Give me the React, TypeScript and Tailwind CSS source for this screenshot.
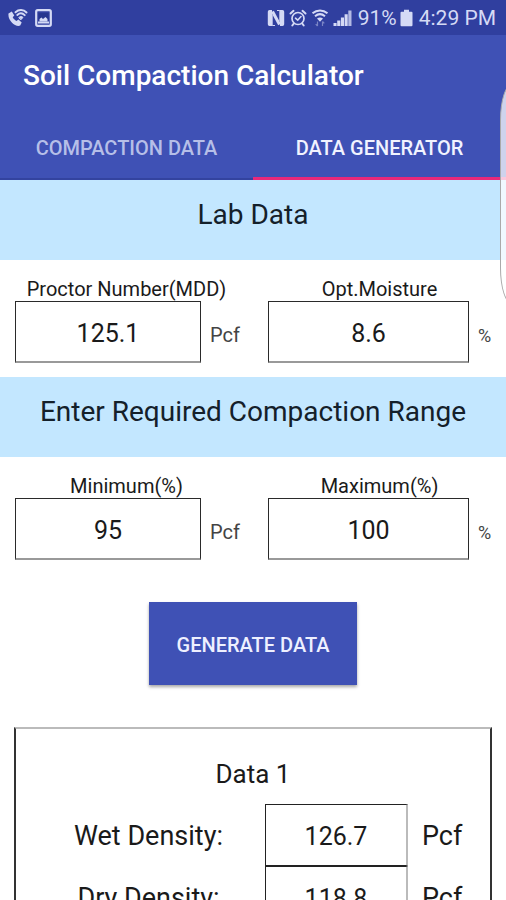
const labFields = [
  { id: "mdd", label: "Proctor Number(MDD)", value: "125.1", unit: "Pcf" },
  { id: "moisture", label: "Opt.Moisture", value: "8.6", unit: "%" }
];

const rangeFields = [
  { id: "min", label: "Minimum(%)", value: "95", unit: "Pcf" },
  { id: "max", label: "Maximum(%)", value: "100", unit: "%" }
];

const results = [
  { id: "wet", label: "Wet Density:", value: "126.7", unit: "Pcf" },
  { id: "dry", label: "Dry Density:", value: "118.8", unit: "Pcf" }
];

type Field = { id: string; label: string; value: string; unit: string };

function StatusBar() {
  return (
    <div className="h-[35px] shrink-0 bg-[#303f9f] flex items-center justify-between pl-2 pr-[10px] text-[#d5daf5]">
      <div className="flex items-center gap-[7px]">
        {/* Wi-Fi calling */}
        <svg width="20" height="20" viewBox="0 0 20 20" fill="none" stroke="currentColor" strokeLinecap="round">
          <path d="M.5 5.5 3.8 3.5l2.5 4-1.6 1.8c.8 1.6 2.1 2.8 3.8 3.7l1.9-1.4 3.3 3-1.5 3C7.5 19.5-.5 12.5.5 5.500Z" fill="currentColor" stroke="none" />
          <path d="M7.5 4.2c3.2-3 8-3 11 .3M9.3 6.9c2.2-2 5.2-2 7.4.2" strokeWidth="2" />
          <path d="M11 9.300c1.2-1 2.8-1 4 .1l-2 2.200Z" fill="currentColor" strokeWidth="1" />
        </svg>
        {/* Screenshot saved */}
        <svg width="17" height="18" viewBox="0 0 17 18" fill="none" stroke="currentColor">
          <rect x="1.2" y="1.2" width="14.6" height="15.6" rx="1.5" strokeWidth="2.2" />
          <rect x="3.5" y="4" width="10" height="8.5" fill="#26358f" stroke="none" />
          <path d="M4.5 12.5V10l2-1.5 1.5 1.5 2.5-2 2 2v2.500Z" fill="currentColor" stroke="none" />
          <path d="M3 13.5h11" strokeWidth="2" />
        </svg>
      </div>

      <div className="flex items-center">
        {/* NFC */}
        <svg width="18" height="18" viewBox="0 0 18 18" fill="none" stroke="currentColor">
          <path d="M5 1H2.5Q.8 1 .8 2.8v12.4Q.8 17 2.5 17H5ZM13 1h2.5q1.7 0 1.7 1.8v12.4q0 1.8-1.7 1.800H13Z" fill="currentColor" stroke="none" />
          <path d="m5.5 2.5 7 13" strokeWidth="3" />
          <path d="M5.2 5.5V16.5H8M12.8 12.5v-11H10" strokeWidth="1" />
        </svg>
        {/* Alarm */}
        <svg className="ml-1" width="18" height="18" viewBox="0 0 18 18" fill="none" stroke="currentColor" strokeLinecap="round">
          <circle cx="9" cy="9.5" r="6" strokeWidth="1.7" />
          <path d="M1.5 4.5 4.5 1.800M16.500 4.500l-3-2.700M4.800 14.500l-1.500 2M13.200 14.500l1.500 2" strokeWidth="2" />
          <path d="m6.5 9.2 2.2 2 3.3-3.7" strokeWidth="1.6" />
        </svg>
        {/* Wi-Fi */}
        <svg className="ml-1" width="18" height="18" viewBox="0 0 18 18" fill="none" stroke="currentColor">
          <path d="M1.5 4.3c4.5-3.7 10.5-3.7 15 0M4 7.2c3-2.5 7-2.5 10 0" strokeWidth="2" />
          <path d="M6 9.6c1.9-1.5 4.1-1.5 6 0l-3 3.200Z" fill="currentColor" stroke="none" />
          <path d="M6.5 12.5V17m-1.8-1.8L6.5 17M11.5 17v-4.5m1.8 1.900-1.8-1.900" strokeWidth="1.2" opacity=".45" />
        </svg>
        {/* Signal */}
        <svg className="ml-1" width="19" height="18" viewBox="0 0 19 18" fill="currentColor">
          <path d="M.5 14h3.1v3H.5zM4.2 11.5h3.1V17H4.2zM7.9 8.5H11V17H7.9zM11.6 5.3h3.1V17h-3.1z" />
          <path d="M15.3 1.5h3.2V17h-3.2z" opacity=".8" />
        </svg>
        <span className="ml-[6px] text-[21px] leading-6">91%</span>
        {/* Battery */}
        <svg className="ml-[3px]" width="13" height="18" viewBox="0 0 13 18" fill="currentColor">
          <path d="M4 .8h5v1.9h2.5q1 0 1 1V16q0 1.2-1 1.2h-10q-1 0-1-1.2V3.7q0-1 1-1H4Z" />
        </svg>
        <span className="ml-[6px] text-[21px] leading-6">4:29 PM</span>
      </div>
    </div>
  );
}

function Band({ title }: { title: string }) {
  return (
    <h2 className="h-20 bg-[#c3e7ff] pt-[19px] text-center text-[28px] leading-8 text-[#14202a]">
      {title}
    </h2>
  );
}

function FieldRow({ fields }: { fields: Field[] }) {
  return (
    <div className="grid grid-cols-2 pt-[17px] pb-[14px]">
      {fields.map((field) => (
        <div key={field.id}>
          <label htmlFor={field.id} className="block text-center text-[20px] leading-6">
            {field.label}
          </label>
          <div className="flex items-center pl-[15px]">
            <input
              id={field.id}
              inputMode="decimal"
              defaultValue={field.value}
              className="h-[62px] min-w-0 flex-1 border border-b-2 border-[#2a2a2a] border-b-[#999] pt-[3px] text-center text-[25px]"
            />
            <span className={field.unit === "%" ? "w-[37px] pl-[9px] pt-[6px] text-[18px] text-[#444]" : "w-[52px] pl-[9px] pt-[6px] text-[20px] text-[#444]"}>
              {field.unit}
            </span>
          </div>
        </div>
      ))}
    </div>
  );
}

function App() {
  return (
    <div className="relative flex h-screen flex-col overflow-hidden bg-white font-['Roboto',sans-serif] text-[#1a1a1a]">
      <StatusBar />

      <header className="shrink-0 bg-[#3f51b5]">
        <h1 className="px-[23px] pt-[25px] text-[28px] leading-8 font-medium text-white">
          Soil Compaction Calculator
        </h1>
        <nav className="mt-6 grid grid-cols-2 text-[20px] font-medium">
          <button type="button" className="h-16 border-b-2 border-[#33439f] pt-px text-[#b6bfe8]">
            COMPACTION DATA
          </button>
          <button type="button" className="h-16 border-b-3 border-[#e8287a] pt-[2px] text-[#f1f3ff]">
            DATA GENERATOR
          </button>
        </nav>
      </header>

      <main className="min-h-0 flex-1 overflow-y-auto [scrollbar-width:none]">
        <Band title="Lab Data" />
        <FieldRow fields={labFields} />
        <Band title="Enter Required Compaction Range" />
        <FieldRow fields={rangeFields} />

        <div className="flex justify-center pt-7">
          <button type="button" className="h-[83px] bg-[#3f51b5] px-7 pt-[2px] text-[20px] font-medium text-[#eef0ff] shadow-[0_2px_3px_rgba(0,0,0,0.35)]">
            GENERATE DATA
          </button>
        </div>

        {/* Generated sample */}
        <section className="mx-[14px] mt-[42px] border-2 border-[#333] border-t-[#bbb] pt-[29px] pb-8">
          <h3 className="text-center text-[26px] leading-8">Data 1</h3>
          <div className="mt-[14px]">
            {results.map((row) => (
              <div key={row.id} className="flex items-center">
                <label htmlFor={row.id} className="flex-1 pl-4 pt-[2px] text-center text-[27px] leading-8">
                  {row.label}
                </label>
                <input
                  id={row.id}
                  readOnly
                  value={row.value}
                  className="h-[62px] w-[143px] border border-r-2 border-[#222] border-r-[#bbb] pt-[2px] text-center text-[25px]"
                />
                <span className="w-[82px] pl-[14px] pt-[2px] text-[27px] leading-8">{row.unit}</span>
              </div>
            ))}
          </div>
        </section>
      </main>

      {/* Edge panel handle */}
      <div className="absolute top-[84px] -right-[18px] h-[220px] w-6 rounded-[12px/36px] border border-[#aaa] bg-white/75"></div>
    </div>
  );
}

export default App;
